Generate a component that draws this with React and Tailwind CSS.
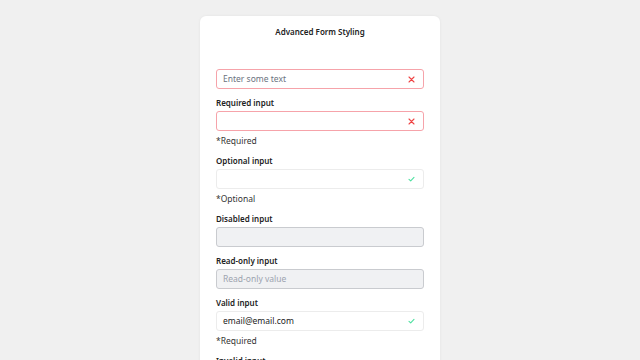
import React from "react";

const XIcon = () => (
  <svg width="7" height="7" viewBox="0 0 7 7" className="shrink-0">
    <path d="M1 1L6 6M6 1L1 6" stroke="#ef4444" strokeWidth="1.1" strokeLinecap="round" />
  </svg>
);

const Check = () => (
  <svg width="7" height="6" viewBox="0 0 7 6" className="shrink-0">
    <path d="M1 3.4L2.7 4.9L6 1.3" stroke="#4ee0a0" strokeWidth="1.1" fill="none" strokeLinecap="round" strokeLinejoin="round" />
  </svg>
);

function Field({ label, children, helper, first }) {
  return (
    <div className={first ? "" : "mt-2"}>
      {label && (
        <div className="h-[12px] leading-[12px] text-[8px] font-semibold text-[#222] mb-[2px]">{label}</div>
      )}
      {children}
      {helper && <div className="mt-1 h-[12px] leading-[12px] text-[8.5px] text-[#333]">{helper}</div>}
    </div>
  );
}

function Box({ className, children }) {
  return (
    <div className={"h-[20px] rounded-[3px] border flex items-center justify-between pl-[6px] pr-[8px] text-[8.5px] " + className}>
      {children}
    </div>
  );
}

export default function App() {
  return (
    <div className="w-[640px] h-[360px] overflow-hidden bg-[#f0f0f0]" style={{ fontFamily: '"Noto Sans", "Open Sans", sans-serif' }}>
      <div className="mx-auto mt-4 w-[240px] h-[400px] bg-white rounded-[6px] shadow-[0_0_3px_rgba(0,0,0,0.06)] px-4 pt-[10px]">
        <div className="h-[12px] leading-[12px] text-center text-[8px] font-semibold text-[#222]">Advanced Form Styling</div>
        <div className="mt-[31px]">
          <Field first>
            <Box className="border-[#f6a3aa] text-[#6b7280]">
              <span>Enter some text</span>
              <XIcon />
            </Box>
          </Field>
          <Field label="Required input" helper="*Required">
            <Box className="border-[#f6a3aa]">
              <span />
              <XIcon />
            </Box>
          </Field>
          <Field label="Optional input" helper="*Optional">
            <Box className="border-[#ececec]">
              <span />
              <Check />
            </Box>
          </Field>
          <Field label="Disabled input">
            <Box className="border-[#c9cbcf] bg-[#f0f1f3]">
              <span />
            </Box>
          </Field>
          <Field label="Read-only input">
            <Box className="border-[#c9cbcf] bg-[#f0f1f3] text-[#9ca3af]">
              <span>Read-only value</span>
            </Box>
          </Field>
          <Field label="Valid input" helper="*Required">
            <Box className="border-[#ececec] text-[#222]">
              <span>email@email.com</span>
              <Check />
            </Box>
          </Field>
          <Field label="Invalid input">
            <Box className="border-[#f6a3aa]">
              <span />
              <XIcon />
            </Box>
          </Field>
        </div>
      </div>
    </div>
  );
}
